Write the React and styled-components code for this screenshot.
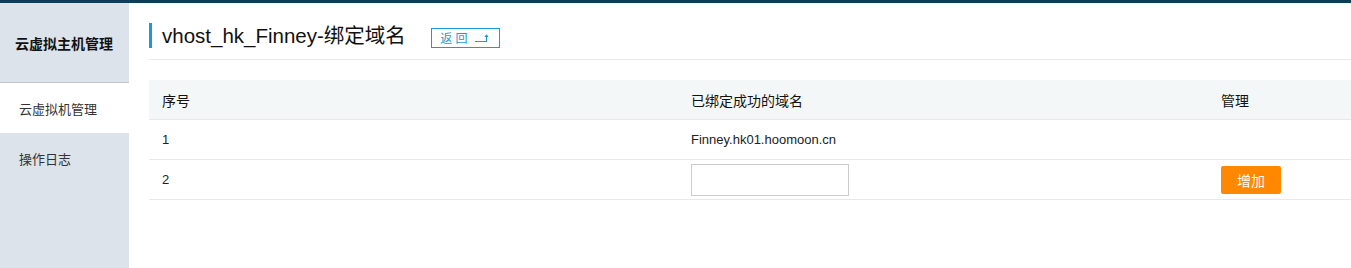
import React from 'react';
import styled, { createGlobalStyle } from 'styled-components';

const GlobalStyle = createGlobalStyle`
  html, body {
    margin: 0;
    padding: 0;
    background: #fff;
    font-family: "Liberation Sans", "Noto Sans CJK SC", sans-serif;
    color: #222;
  }
`;

const App = () => {
  return (
    <Page>
      <GlobalStyle />
      <TopBar />
      <Body>
        <Sidebar>
          <SideTitle>云虚拟主机管理</SideTitle>
          <SideItem $active>云虚拟机管理</SideItem>
          <SideItem>操作日志</SideItem>
        </Sidebar>
        <Main>
          <TitleRow>
            <Title>vhost_hk_Finney-绑定域名</Title>
            <BackButton>
              返 回
              <svg width="16" height="10" viewBox="0 0 16 10">
                <path d="M1 8.5 H12.5 V2" stroke="#1a9bd7" strokeWidth="1.2" fill="none" />
                <path d="M10.3 4 L12.5 1.3 L14.7 4 Z" fill="#1a9bd7" />
              </svg>
            </BackButton>
          </TitleRow>
          <Table>
            <HeadRow>
              <Cell>序号</Cell>
              <Cell>已绑定成功的域名</Cell>
              <Cell>管理</Cell>
            </HeadRow>
            <Row>
              <Cell>1</Cell>
              <Cell>Finney.hk01.hoomoon.cn</Cell>
              <Cell />
            </Row>
            <Row>
              <Cell>2</Cell>
              <Cell>
                <DomainInput type="text" />
              </Cell>
              <Cell>
                <AddButton>增加</AddButton>
              </Cell>
            </Row>
          </Table>
        </Main>
      </Body>
    </Page>
  );
};

const Page = styled.div`
  width: 1351px;
  height: 268px;
  overflow: hidden;
`;

const TopBar = styled.div`
  height: 3px;
  background: #0c3d5c;
`;

const Body = styled.div`
  display: flex;
  height: 265px;
`;

const Sidebar = styled.div`
  width: 129px;
  flex-shrink: 0;
  background: #dce3ea;
`;

const SideTitle = styled.div`
  height: 80px;
  box-sizing: border-box;
  border-bottom: 1px solid #bfc6cc;
  display: flex;
  align-items: center;
  padding-left: 15px;
  font-size: 14px;
  font-weight: bold;
  color: #111;
`;

const SideItem = styled.div`
  height: 50px;
  display: flex;
  align-items: center;
  padding-left: 19px;
  font-size: 13px;
  color: #333;
  background: ${(p) => (p.$active ? '#fff' : 'transparent')};
`;

const Main = styled.div`
  flex: 1;
  padding: 20px 0 0 20px;
`;

const TitleRow = styled.div`
  display: flex;
  align-items: center;
  height: 25px;
  padding-bottom: 11px;
  border-bottom: 1px solid #e8e8e8;
`;

const Title = styled.h1`
  margin: 0;
  border-left: 3px solid #1a9bd7;
  padding-left: 10px;
  height: 25px;
  line-height: 25px;
  font-size: 20.5px;
  font-weight: normal;
  color: #111;
`;

const BackButton = styled.button`
  margin-left: 25px;
  margin-top: 4px;
  width: 69px;
  height: 20px;
  box-sizing: border-box;
  border: 1px solid #1a9bd7;
  background: #fff;
  color: #1a9bd7;
  font-family: inherit;
  font-size: 12px;
  display: flex;
  align-items: center;
  justify-content: center;
  gap: 7px;
  padding: 0;
  cursor: pointer;
`;

const Table = styled.div`
  margin-top: 20px;
`;

const HeadRow = styled.div`
  display: grid;
  grid-template-columns: 529px 530px 1fr;
  height: 40px;
  box-sizing: border-box;
  background: #f4f7f7;
  border-bottom: 1px solid #e8e8e8;
  font-size: 14px;
  color: #111;
`;

const Row = styled.div`
  display: grid;
  grid-template-columns: 529px 530px 1fr;
  height: 40px;
  box-sizing: border-box;
  border-bottom: 1px solid #e8e8e8;
  font-size: 13px;
  color: #222;
`;

const Cell = styled.div`
  display: flex;
  align-items: center;
  padding-left: 13px;
`;

const DomainInput = styled.input`
  width: 158px;
  height: 32px;
  box-sizing: border-box;
  border: 1px solid #ccc;
  padding: 0 6px;
  margin: 0;
  outline: none;
`;

const AddButton = styled.button`
  width: 60px;
  height: 28px;
  border: none;
  border-radius: 2px;
  background: #ff8800;
  color: #fff;
  font-family: inherit;
  font-size: 14px;
  cursor: pointer;
`;

export default App;
